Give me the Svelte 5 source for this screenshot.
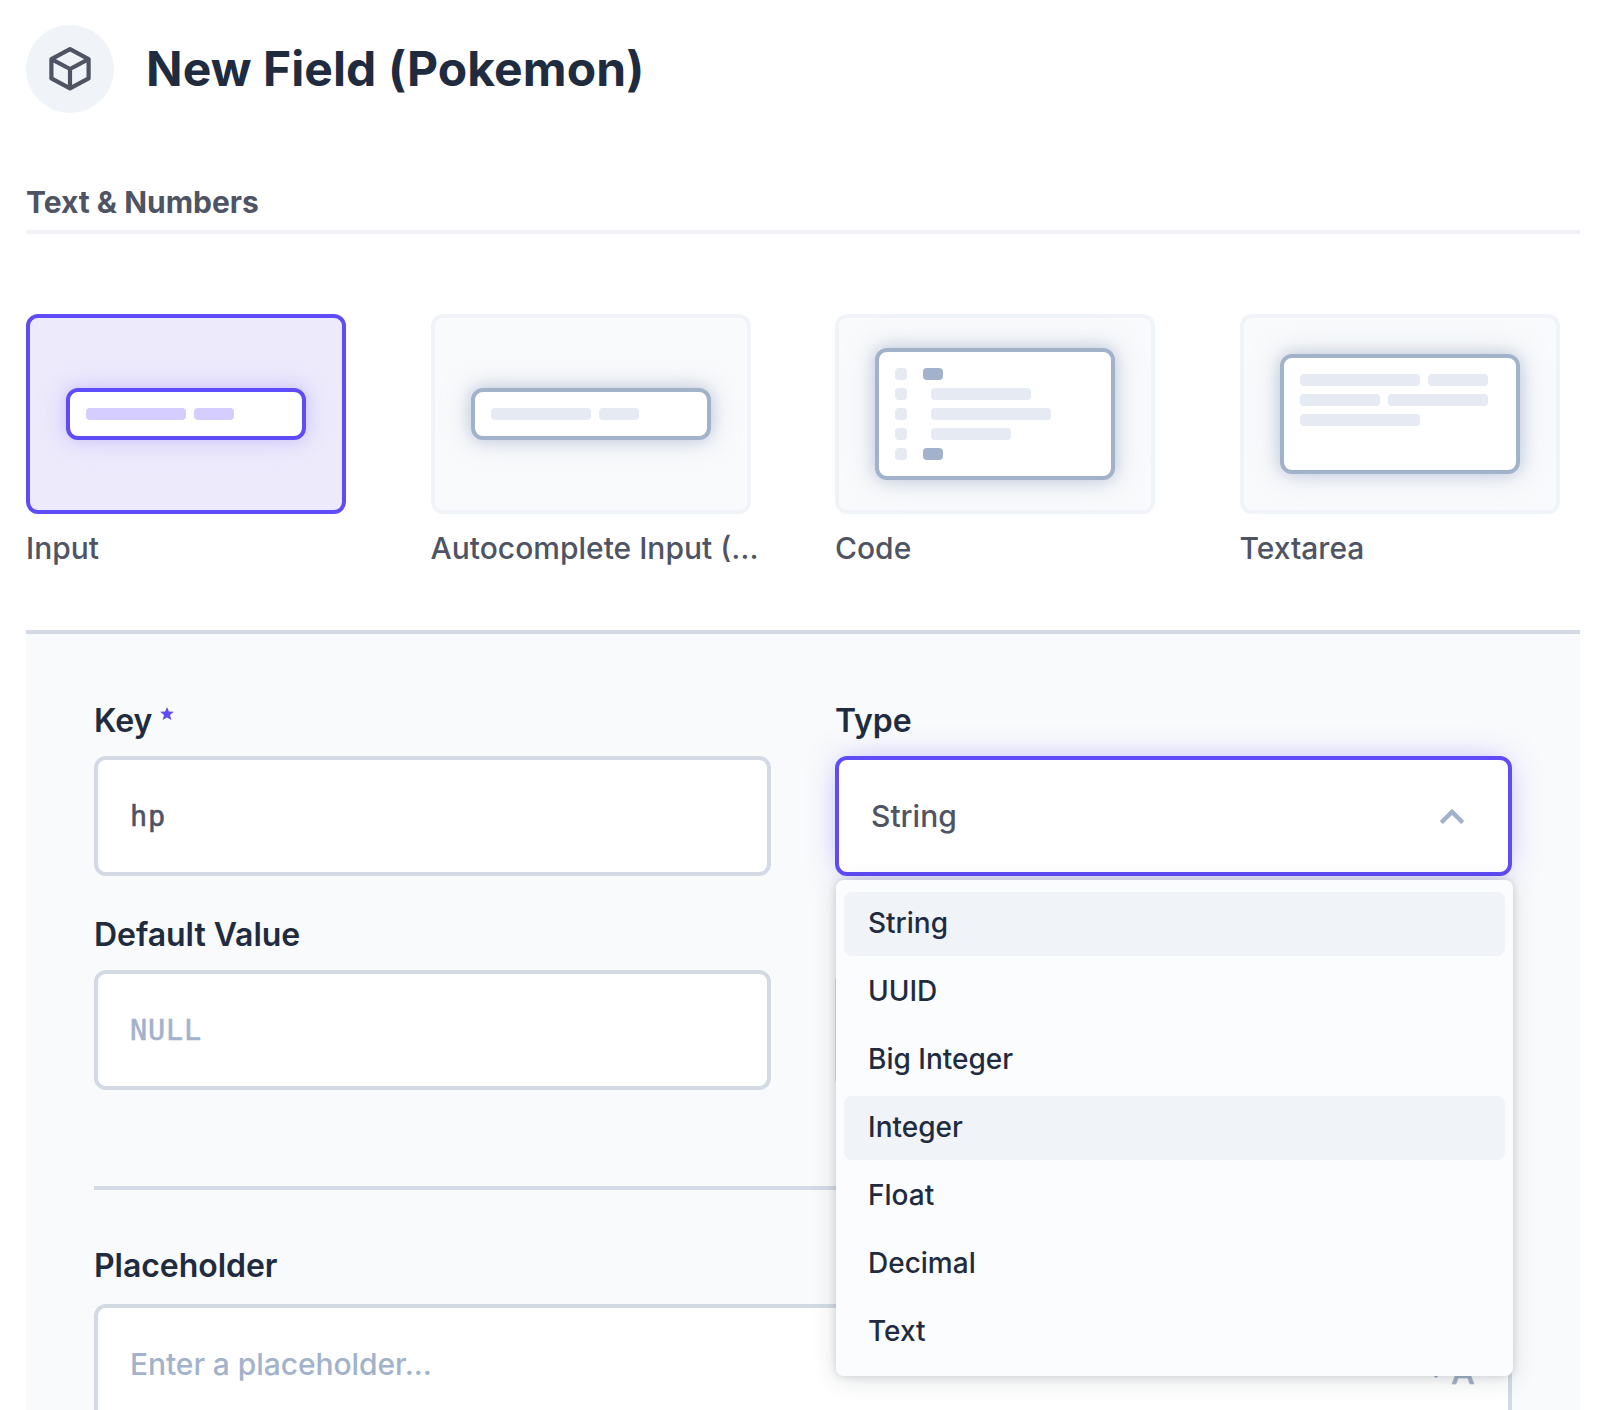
<script>
  const interfaces = [
    { name: 'Input', kind: 'line', active: true },
    { name: 'Autocomplete Input (API)', kind: 'line' },
    { name: 'Code', kind: 'code' },
    { name: 'Textarea', kind: 'textarea' },
  ];
  const types = ['String', 'UUID', 'Big Integer', 'Integer', 'Float', 'Decimal', 'Text'];
  const highlighted = ['String', 'Integer'];
</script>

<main>
  <header>
    <span class="badge">
      <svg viewBox="0 0 24 24" width="48" height="48" fill="none" stroke="currentColor" stroke-width="2.1" stroke-linejoin="round">
        <path d="M12 2.100 21.300 7.100V16.700L12 21.700 2.700 16.700V7.100Z M2.700 7.100 12 12 21.300 7.100 M12 12V21.700" />
      </svg>
    </span>
    <h1>New Field (Pokemon)</h1>
  </header>

  <h2>Text &amp; Numbers</h2>

  <div class="interfaces">
    {#each interfaces as item}
      <div class="interface" class:active={item.active}>
        <div class="card">
          <div class="preview {item.kind}">
            {#if item.kind === 'line'}
              <div class="row"><i class="w100"></i><i class="w40"></i></div>
            {:else if item.kind === 'code'}
              <div class="row"><i class="w12"></i><i class="w20 key"></i></div>
              <div class="row"><i class="w12"></i><i class="w100 nested"></i></div>
              <div class="row"><i class="w12"></i><i class="w120 nested"></i></div>
              <div class="row"><i class="w12"></i><i class="w80 nested"></i></div>
              <div class="row"><i class="w12"></i><i class="w20 key"></i></div>
            {:else}
              <div class="row"><i class="w120"></i><i class="w60"></i></div>
              <div class="row"><i class="w80"></i><i class="w100"></i></div>
              <div class="row"><i class="w120"></i></div>
            {/if}
          </div>
        </div>
        <div class="name">{item.name}</div>
      </div>
    {/each}
  </div>

  <section class="panel">
    <div class="grid">
      <div class="field">
        <div class="label">Key
          <svg class="star" viewBox="0 0 20 19" width="14" height="13"><path fill="currentColor" d="M10 0l2.700 6.700 7.300.3-5.600 4.800L16.400 19 10 15.200 3.600 19 5.600 11.800 0 7l7.300-.3z" /></svg>
        </div>
        <div class="input mono">hp</div>
      </div>
      <div class="field">
        <div class="label">Type</div>
        <div class="input focus">
          <span>String</span>
          <svg class="icon chevron" viewBox="0 0 24 24" width="48" height="48"><path fill="currentColor" stroke="currentColor" stroke-width=".3" d="M12 8l-6 6 1.410 1.410L12 10.830l4.590 4.580L18 14z" /></svg>
        </div>
        <div class="menu">
          {#each types as type}
            <div class="option" class:on={highlighted.includes(type)}>{type}</div>
          {/each}
        </div>
      </div>
      <div class="field">
        <div class="label">Default Value</div>
        <div class="input mono hint">NULL</div>
      </div>
      <div class="field">
        <div class="label"></div>
        <div class="input"></div>
      </div>
    </div>

    <hr />

    <div class="field last">
      <div class="label">Placeholder</div>
      <div class="input hint">
        <span>Enter a placeholder...</span>
        <svg class="icon" viewBox="0 0 24 24" width="48" height="48"><path fill="currentColor" stroke="currentColor" stroke-width=".3" d="M12.870 15.070l-2.540-2.510.03-.03c1.740-1.940 2.980-4.170 3.710-6.530H17V4h-7V2H8v2H1v1.990h11.170C11.500 7.920 10.440 9.750 9 11.350 8.070 10.320 7.300 9.190 6.690 8h-2c.73 1.630 1.730 3.170 2.980 4.560l-5.090 5.020L4 19l5-5 3.110 3.110.76-2.040zM18.500 10h-2L12 22h2l1.120-3h4.750L21 22h2l-4.500-12zm-2.620 7l1.620-4.330L19.120 17h-3.240z" /></svg>
      </div>
    </div>
  </section>
</main>

<style>
  :global(body) { margin: 0; background: #fff; overflow: hidden; }
  main {
    box-sizing: border-box;
    height: 1410px;
    padding: 25px 40px 0 26px;
    overflow: hidden;
    font: 500 30px/44px Inter, "Liberation Sans", sans-serif;
    color: #4f5464;
  }
  header { display: flex; align-items: center; gap: 32px; }
  .badge {
    display: flex; align-items: center; justify-content: center;
    width: 88px; height: 88px; border-radius: 50%; background: #f0f4f9;
  }
  h1 { margin: 0; font-size: 48px; line-height: 64px; font-weight: 700; letter-spacing: .08px; color: #1f2c40; }
  h2 {
    margin: 67px 0 80px; padding-bottom: 6px; border-bottom: 4px solid #f0f2f8;
    font-size: 30px; line-height: 44px; font-weight: 700;
  }
  .interfaces { display: grid; grid-template-columns: repeat(4, minmax(0, 1fr)); gap: 64px; }
  .card {
    box-sizing: border-box; width: 320px; height: 200px;
    display: flex; align-items: center; justify-content: center;
    border: 4px solid #f0f4f9; border-radius: 12px; background: #f9fafc;
  }
  .preview {
    box-sizing: border-box; width: 240px; padding: 16px;
    display: flex; flex-direction: column; gap: 8px;
    border: 4px solid #a3b2cb; border-radius: 12px; background: #fff;
    box-shadow: 0 0 32px rgba(163, 178, 203, .25), 0 0 16px rgba(140, 157, 190, .5);
  }
  .textarea { height: 120px; }
  .row { display: flex; gap: 8px; }
  .code .row { gap: 16px; }
  i { height: 12px; border-radius: 4px; background: #e6eaf2; }
  .key { background: #a3b2cb; }
  .nested { margin-left: 8px; }
  .w12 { width: 12px; }
  .w20 { width: 20px; }
  .w40 { width: 40px; }
  .w60 { width: 60px; }
  .w80 { width: 80px; }
  .w100 { width: 100px; }
  .w120 { width: 120px; }
  .active .card { border-color: #5f4bf8; background: #edeafc; }
  .active .preview {
    border-color: #5f4bf8;
    box-shadow: 0 0 32px rgba(190, 178, 252, .2), 0 0 16px rgba(170, 155, 250, .5);
  }
  .active i { background: #d5cdff; }
  .name { margin-top: 12px; line-height: 44px; overflow: hidden; white-space: nowrap; text-overflow: ellipsis; }

  .panel { margin-top: 60px; padding: 64px 68px; border-top: 4px solid #d3dae4; background: #f9fafc; }
  .grid { display: grid; grid-template-columns: 1fr 1fr; gap: 36px 64px; }
  .field { position: relative; }
  .label {
    height: 44px; margin-bottom: 14px;
    font-size: 32px; line-height: 46px; font-weight: 600; letter-spacing: -.05px; color: #1f2c40;
  }
  .last .label { margin-bottom: 17px; }
  .star { display: inline-block; color: #5f4bf8; vertical-align: 12px; }
  .input {
    box-sizing: border-box; height: 120px; padding: 0 32px;
    display: flex; align-items: center; justify-content: space-between;
    border: 4px solid #d3dae4; border-radius: 12px; background: #fff;
  }
  .last .input { letter-spacing: -.07px; }
  .focus { border-color: #5f4bf8; box-shadow: 0 0 32px -8px rgba(95, 75, 248, .5); }
  .mono {
    padding-top: 2px;
    font-family: "DejaVu Sans Mono", monospace; font-size: 28.500px; letter-spacing: .85px;
    -webkit-text-stroke: .6px currentColor;
  }
  .hint, .icon { color: #a3b2cb; }
  .chevron { margin-top: 2px; }
  .menu {
    position: absolute; z-index: 1; top: 182px; left: 1px;
    box-sizing: border-box; width: 677px; padding: 12px 8px;
    display: flex; flex-direction: column; gap: 4px;
    border-radius: 8px; background: #fbfcfe;
    box-shadow: 0 0 8px rgba(38, 50, 56, .16), 0 4px 24px rgba(38, 50, 56, .14);
  }
  .option {
    height: 64px; padding-left: 24px; border-radius: 8px;
    font-size: 28px; line-height: 63px; color: #1f2c40;
  }
  .on { background: #f0f3f8; }
  hr { height: 4px; margin: 96px 0 53px; border: 0; background: #d3dae4; }
</style>
